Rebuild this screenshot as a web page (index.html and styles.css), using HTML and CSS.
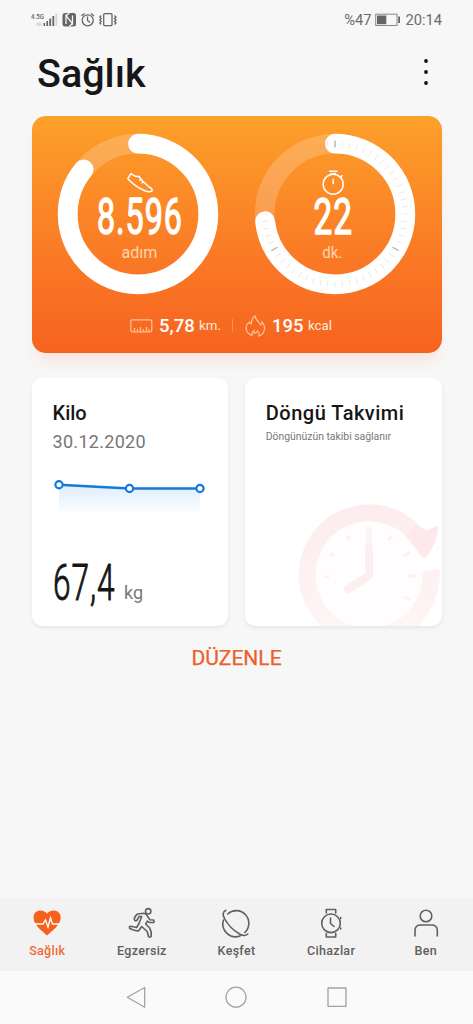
FILE: index.html
```html
<!DOCTYPE html>
<html lang="tr">
<head>
<meta charset="utf-8">
<title>Sağlık</title>
<link rel="stylesheet" href="styles.css">
</head>
<body>
<div class="screen">
  <header class="status">
    <svg class="status-icons" width="90" height="18" viewBox="30 11 90 18">
      <text class="net" x="31" y="19" textLength="13" lengthAdjust="spacingAndGlyphs">4.5G</text>
      <g fill="#666"><rect x="36.500" y="22.500" width="5" height="3.500" fill="#ddd"/><rect x="43.5" y="23" width="1.6" height="3"/><rect x="46.4" y="21" width="1.7" height="5"/><rect x="49.3" y="18.5" width="1.8" height="7.5"/><rect x="52.4" y="16" width="1.8" height="10"/><rect x="55.4" y="13.5" width="1.8" height="12.5" fill="#d5d5d5"/></g>
      <rect x="62.5" y="13" width="13.5" height="13.5" rx="2.5" fill="#666"/>
      <path d="M66 24V15.500L72.500 23.700V15.500M66 16L69.200 13M72.500 23.500L69.300 26.500" fill="none" stroke="#f7f7f7" stroke-width="1.300"/>
      <g fill="none" stroke="#666" stroke-width="1.300"><circle cx="87.700" cy="20.300" r="5.500"/><path d="M87.500 16.500V20.500L90 22.500M81.500 16L84.500 13.500M91 13.500L94 16"/><rect x="103.700" y="13.700" width="8.300" height="12" rx="1"/><path d="M101.200 15.500L99.800 17L101.200 18.500L99.800 20L101.200 21.500L99.800 23L101.200 24.500M114.500 15.500L116 17L114.500 18.500L116 20L114.500 21.500L116 23L114.500 24.500"/></g>
    </svg>
    <div class="status-right">
      <span>%47</span>
      <svg width="26" height="14" viewBox="0 0 26 14"><rect x=".7" y="1.200" width="21.300" height="11.300" fill="none" stroke="#888" stroke-width="1"/><rect x="2" y="2.500" width="9.300" height="8.700" fill="#666"/><rect x="23.200" y="3.500" width="1.800" height="6.500" fill="#666"/></svg>
      <span>20:14</span>
    </div>
  </header>

  <div class="title-row">
    <h1>Sağlık</h1>
    <svg class="more" width="6" height="28" viewBox="0 0 6 28"><circle cx="3" cy="3" r="1.900"/><circle cx="3" cy="14" r="1.900"/><circle cx="3" cy="25" r="1.900"/></svg>
  </div>

  <section class="activity">
    <div class="rings">
      <svg width="162" height="162" viewBox="-81 -81 162 162">
        <circle class="track" r="70.300"/>
        <circle class="progress" r="70.300" pathLength="360" stroke-dasharray="309.300 360" transform="rotate(-90)"/>
        <g class="line" transform="translate(-138.200 -213.800)"><path d="M128 178.500L131.300 173.300L133 174.600Q135.500 177 139 176L142 180L149.500 187Q153.500 189 152 191Q149.500 192.500 144 190Q135 186 128 178.500ZM139.500 180.500L142 178.700M141.800 183L144.200 181.300"/></g>
        <text class="big" x="-41" y="20" textLength="86" lengthAdjust="spacingAndGlyphs">8.596</text>
        <text class="unit" x="-16.500" y="43.800" textLength="36" lengthAdjust="spacingAndGlyphs">adım</text>
      </svg>
      <svg width="162" height="162" viewBox="-81 -81 162 162">
        <circle class="track" r="70.300"/>
        <circle class="progress" r="70.300" pathLength="360" stroke-dasharray="264 360" transform="rotate(-90)"/>
        <circle class="ticks" r="70" pathLength="360" stroke-dasharray=".6 5.400" stroke-dashoffset=".3"/>
        <path class="major" d="M0-73.500V-66.500M63.700 36.800L57.600 33.300M-63.700 36.800L-57.600 33.300"/>
        <g class="line" transform="translate(-335 -213.800)"><circle cx="333.200" cy="184" r="10"/><path d="M333.200 178.500V184M329 171H337.500M330.500 173.500H336M340.500 177L342.500 175"/></g>
        <text class="big" x="-21.500" y="20" textLength="39.500" lengthAdjust="spacingAndGlyphs">22</text>
        <text class="unit" x="-12.700" y="43.800" textLength="20" lengthAdjust="spacingAndGlyphs">dk.</text>
      </svg>
    </div>
    <div class="totals">
      <svg width="23" height="14" viewBox="0 0 23 14"><rect x=".8" y=".8" width="21" height="12" rx="1.500"/><path d="M4.500 12V9M7.500 12V10M10.500 12V8M13.500 12V10M16.500 12V8M19 12V10"/></svg>
      <b>5,78</b><span>km.</span>
      <i></i>
      <svg class="flame" width="21" height="22" viewBox="0 0 21 22"><path d="M7 20.500Q1 18 1 12.500Q1.500 9 4.500 7Q5 9 6.500 9Q6 4 10 1Q11 5 14 7.500Q15 9 15.500 10Q17 9 17 7Q20 10 19.500 14Q19 19 14 21Q14.500 18 12.500 16Q11.500 18 9.500 18.500L9 15.500Q6.500 17 7 20.500Z"/></svg>
      <b class="kcal">195</b><span>kcal</span>
    </div>
  </section>

  <main class="cards">
    <article class="card">
      <h2>Kilo</h2>
      <p class="date">30.12.2020</p>
      <svg class="chart" width="156" height="45" viewBox="0 0 156 45">
        <defs><linearGradient id="fade" x1="0" y1="0" x2="0" y2="1"><stop offset="0" stop-color="#deedfb"/><stop offset="1" stop-color="#fff"/></linearGradient></defs>
        <path d="M7 7.700L77.500 11.500H148V39H7Z" fill="url(#fade)"/>
        <path d="M7 7.700L77.500 11.500H148" fill="none" stroke="#1679d8" stroke-width="2.500"/>
        <g fill="#fff" stroke="#1679d8" stroke-width="2.200"><circle cx="7" cy="7.700" r="3.600"/><circle cx="77.500" cy="11.500" r="3.600"/><circle cx="148" cy="11.500" r="3.600"/></g>
      </svg>
      <svg class="weight" width="110" height="62" viewBox="0 -7 110 62">
        <text class="kg-value" x="0" y="42" textLength="62.500" lengthAdjust="spacingAndGlyphs">67,4</text>
        <text class="kg" x="71" y="41" textLength="19">kg</text>
      </svg>
    </article>
    <article class="card cycle">
      <h2 class="wide">Döngü Takvimi</h2>
      <p class="note">Döngünüzün takibi sağlanır</p>
      <svg class="clock" width="145" height="123" viewBox="297 503 145 123">
        <defs><linearGradient id="rose" gradientUnits="userSpaceOnUse" x1="0" y1="505" x2="0" y2="640"><stop offset="0" stop-color="#fdecee"/><stop offset="1" stop-color="#fef6f6"/></linearGradient></defs>
        <circle cx="369" cy="575" r="54" fill="#fffdfd"/>
        <path d="M431 570A62 62 0 1 1 412 530" fill="none" stroke="url(#rose)" stroke-width="17"/>
        <path d="M417 524L426 531L436 526Q438 526 438 529Q437 543 427 556Q424 558 421 556L406 536Z" fill="#fde9eb"/>
        <path d="M369 529V548" stroke="#faf6f7" stroke-width="6" stroke-linecap="round"/>
        <path d="M369 548V576L348 589" fill="none" stroke="#fdeeef" stroke-width="8" stroke-linecap="round" stroke-linejoin="round"/>
        <path d="M347 536L350 540M330 553L334 556M324 577H329M388 540L392 536M404 556L410 552M408 576H416M404 597L410 600" stroke="#f7f3f4" stroke-width="3"/>
      </svg>
    </article>
  </main>
  <div class="edit">DÜZENLE</div>

  <nav class="tabs">
    <a class="active"><svg width="34" height="34" viewBox="30 906 34 34"><path d="M47 935.500C42 931 33.500 925 33.500 917.500C33.500 910 42.500 908.500 47 913.500C51.500 908.500 60.700 910 60.700 917.500C60.700 925 52 931 47 935.500Z" fill="#f8601d"/><path d="M34 924H43L45.500 920L48 927L50.500 918L52.500 924H60" fill="none" stroke="#fff" stroke-width="1.400"/></svg><span>Sağlık</span></a>
    <a><svg class="stroke" width="34" height="34" viewBox="124.800 906 34 34"><circle cx="148" cy="911.300" r="2.700"/><path d="M134 919.500Q134.500 915.500 137.500 914L143.500 913.300Q146.500 914 147.500 916.500L149.500 919.700L153.500 920Q154.500 921.500 153.500 922.500H149L147.300 921L145.500 924L149.500 928Q151.500 931.500 151 936.500Q149.500 938 148.300 936.500L147 931.500L141.500 926.500L138.500 930.700Q136 931.500 129.500 928.500Q128.500 926.500 130.500 926.300L136.500 927.500L139 923L141.500 916.500H139L136.500 920.500Q135 921.500 134 919.500Z"/></svg><span>Egzersiz</span></a>
    <a><svg class="stroke" width="34" height="34" viewBox="219.500 906 34 34"><path d="M228.200 914A12.500 12.500 0 1 1 245.300 932.500M224 920A12.800 12.800 0 0 0 240.500 936M226.300 910.300C223 912 223 915 225 918.500Q230 928 240 934Q245 937 248.300 934"/></svg><span>Keşfet</span></a>
    <a><svg class="stroke" width="34" height="34" viewBox="314 906 34 34"><circle cx="331" cy="923.300" r="9.300"/><path d="M330.500 918V923.500L334 926.500M326.300 913V909.500H335.700V913M326.300 933.500V937H335.700V933.500M340.700 917.500V918.500M340.700 928V929"/></svg><span>Cihazlar</span></a>
    <a><svg class="stroke" width="34" height="34" viewBox="408.500 906 34 34"><circle cx="425.500" cy="916" r="5.800"/><path d="M414.500 936V930Q415 925 420 925H431Q436.500 925 436.800 930V936"/></svg><span>Ben</span></a>
  </nav>
  <footer class="system">
    <svg width="24" height="24" viewBox="0 0 24 24"><path d="M3.300 12.200L20.700 2.500V22.200Z"/></svg>
    <svg width="24" height="24" viewBox="0 0 24 24"><circle cx="12" cy="12.200" r="10"/></svg>
    <svg width="24" height="24" viewBox="0 0 24 24"><rect x="3" y="3" width="18" height="18.300"/></svg>
  </footer>
</div>
</body>
</html>
```
FILE: styles.css
```css
* { box-sizing: border-box; }
body { margin: 0; font-family: Roboto, "Noto Sans", sans-serif; background: #f7f7f7; }
h1, h2 { margin: 0; font-weight: 500; }
p { margin: 0; font-weight: 400; }
svg { display: block; flex: none; }
.screen { width: 473px; height: 1024px; display: flex; flex-direction: column; overflow: hidden; }

.status { height: 40px; padding: 11px 31px 0 30px; display: flex; justify-content: space-between; }
.net { font-size: 8px; font-weight: 500; fill: #666; }
.status-right { display: flex; align-items: center; height: 18px; gap: 4px; font-size: 14.700px; color: #6b6b6b; }

.title-row { height: 75.500px; padding: 0 44.500px 0 37px; display: flex; justify-content: space-between; }
.title-row h1 { font-size: 39.500px; line-height: 47px; margin-top: 9.500px; color: #161616; }
.more { margin-top: 18px; fill: #111; }

.activity { height: 237.500px; margin: 0 31.500px; flex: none; border-radius: 14px; background: linear-gradient(#fda02a, #fa7825 62%, #f66320); box-shadow: 0 12px 16px -6px rgba(250, 110, 50, .16); padding-top: 17.300px; }
.rings { display: flex; padding-left: 25.700px; gap: 34.800px; }
.track { fill: none; stroke: rgba(255, 255, 255, .2); stroke-width: 19.800; }
.progress { fill: none; stroke: #fff; stroke-width: 19.800; stroke-linecap: round; }
.ticks { fill: none; stroke: rgba(190, 175, 165, .35); stroke-width: 6; }
.major { fill: none; stroke: #b5aca4; stroke-width: 1.200; }
.line { fill: none; stroke: #fff; stroke-width: 1.500; stroke-linejoin: round; }
.big { font-size: 49.500px; font-weight: 400; fill: #fff; stroke: #fff; stroke-width: 1.400; stroke-linejoin: round; letter-spacing: 1.500px; }
.unit { font-size: 16px; fill: #ffd6ae; }
.totals { display: flex; align-items: center; height: 24px; margin-top: 19px; padding-left: 98.500px; color: #fff; }
.totals svg { fill: none; stroke: #ffc29b; stroke-width: 1.200; }
.totals b { font-size: 18.500px; font-weight: 500; margin-left: 6px; width: 40px; }
.totals span { font-size: 13.300px; color: #ffe9dc; }
.totals i { width: 1px; height: 13px; background: #fa9059; margin: 0 12px 0 11px; }
.totals .kcal { width: 36px; }

.cards { display: flex; gap: 17px; margin: 25px 31.500px 0 32px; }
.card { height: 248px; flex: 1; background: #fff; border-radius: 10px; padding: 21px 20.500px; box-shadow: 0 2px 4px rgba(0, 0, 0, .07); overflow: hidden; }
.card h2 { font-size: 20px; line-height: 28px; color: #161616; }
.card .wide { letter-spacing: .5px; white-space: nowrap; }
.date { font-size: 18px; line-height: 22px; margin-top: 4px; color: #777; letter-spacing: .3px; }
.chart { margin: 24px 0 0 -.5px; }
.weight { margin-top: 29px; }
.kg-value { font-size: 50px; font-weight: 300; fill: #161616; stroke: #161616; stroke-width: 1; stroke-linejoin: round; letter-spacing: 1.500px; }
.kg { font-size: 18px; fill: #777; }
.note { font-size: 10.400px; line-height: 14px; margin-top: 3px; color: #777; white-space: nowrap; }
.clock { margin: 59px 0 0 31.500px; }
.edit { text-align: center; margin-top: 20px; font-size: 21px; line-height: 24px; color: #e9622b; -webkit-text-stroke: .25px #e9622b; }

.tabs { margin-top: auto; height: 74px; flex: none; background: #f2f2f2; display: grid; grid-template-columns: repeat(5, 1fr); padding-top: 9px; }
.tabs a { display: flex; flex-direction: column; align-items: center; font-size: 12.500px; line-height: 16px; font-weight: 500; color: #606060; }
.tabs span { margin-top: 3px; letter-spacing: .3px; }
.tabs .active { color: #ee6a35; }
.stroke { fill: none; stroke: #606060; stroke-width: 1.600; stroke-linejoin: round; stroke-linecap: round; }
.system { height: 53px; flex: none; background: #fafafa; display: flex; justify-content: center; gap: 76.500px; padding: 14px 1px 0 0; }
.system svg { fill: none; stroke: #a2a2a2; stroke-width: 1.300; stroke-linejoin: round; }
```
